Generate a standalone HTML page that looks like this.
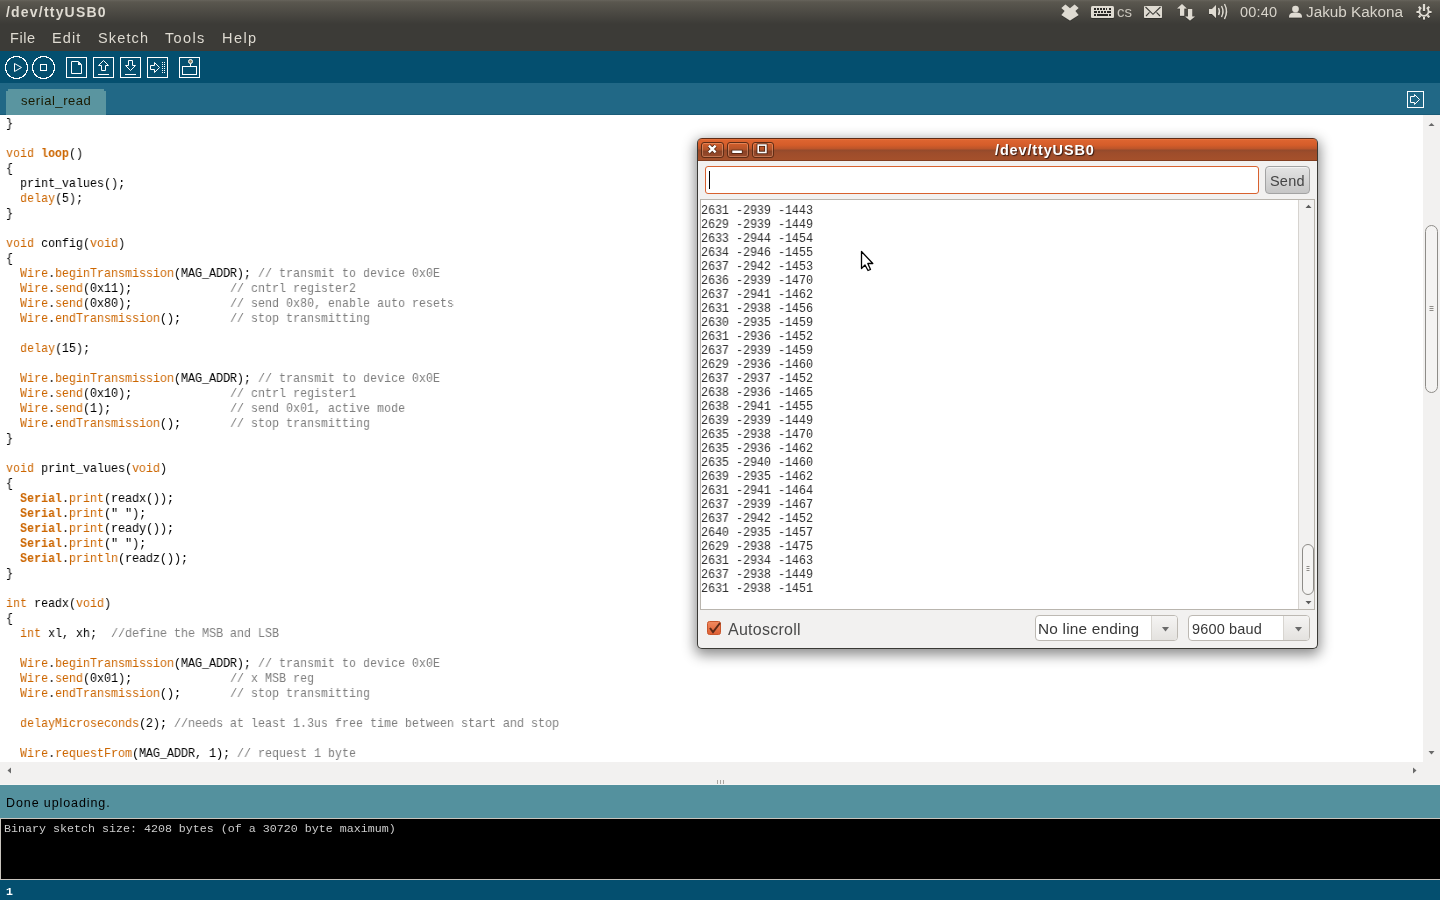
<!DOCTYPE html>
<html><head><meta charset="utf-8">
<style>
*{margin:0;padding:0;box-sizing:border-box}
.t{will-change:transform}
html,body{width:1440px;height:900px;overflow:hidden;background:#fff;font-family:"Liberation Sans",sans-serif}
.a{position:absolute}
#panel{left:0;top:0;width:1440px;height:51px;background:linear-gradient(#67645c 0px,#5a574f 2px,#3c3b37 24px,#3c3b37 51px)}
.pt{position:absolute;color:#dfdbd2;white-space:pre;line-height:16px;will-change:transform}
#toolbar{left:0;top:51px;width:1440px;height:32px;background:#044f6f}
#tabbar{left:0;top:83px;width:1440px;height:32px;background:#216886;border-bottom:1px solid #1a5c78}
#tab{left:6px;top:89px;width:100px;height:26px;background:#5a95a0;clip-path:polygon(2px 0,98px 0,98px 2px,100px 2px,100px 26px,0 26px,0 2px,2px 2px)}
#editor{left:0;top:115px;width:1423px;height:647px;background:#fff;overflow:hidden}
pre.code{position:absolute;left:6px;top:0;font-family:"Liberation Mono",monospace;font-size:13.3px;transform:scaleX(0.87719);transform-origin:0 0;line-height:15px;color:#000;white-space:pre}
.k{color:#cc6600}
.b{color:#cc6600;font-weight:bold}
.c{color:#7e7e7e}
#vscroll{left:1423px;top:115px;width:17px;height:670px;background:#f2f1f0}
#hscroll{left:0;top:762px;width:1440px;height:23px;background:#f2f1f0}
#status{left:0;top:784px;width:1440px;height:34px;background:#54919e;border-top:1px solid #f6f5f4}
#console{left:0;top:818px;width:1440px;height:62px;background:#000;border:1px solid #c8c4bd;border-right:none}
#linestatus{left:0;top:880px;width:1440px;height:20px;background:#044f6f}
.mono{font-family:"Liberation Mono",monospace;white-space:pre}
/* serial window */
#win{left:697px;top:138px;width:621px;height:511px;border-radius:5px 5px 5px 5px;box-shadow:0 4px 13px 2px rgba(0,0,0,0.45);background:#f2f1f0;border:1px solid #3a3935;border-top:none;overflow:hidden}
#wtitle{left:-1px;top:0;width:621px;height:23px;border-radius:5px 5px 0 0;border:1px solid #5e2c16;border-bottom:none;background:linear-gradient(#f0804a 0px,#dd6430 1px,#d55d2a 6px,#b9542a 10px,#944a2c 11px,#9e4d2b 14px,#a5502b 21px,#5e2c16 22px)}
.wb{position:absolute;top:3.5px;width:22.5px;height:16px;border-radius:3px;border:1px solid #5e2c16;box-shadow:inset 0 0 0 1px rgba(255,190,150,0.4);background:linear-gradient(#d55d2a,#b4542a 45%,#8a4327 60%,#9a4a2a)}
#input{left:7px;top:28px;width:554px;height:28px;border:1px solid #d8622f;border-radius:3px;background:#fff}
#send{left:567px;top:28px;width:45px;height:28px;border:1px solid #a3a3a3;border-radius:4px;background:linear-gradient(#e4e4e4,#c6c6c6);box-shadow:inset 0 1px 0 #f4f4f4}
#out{left:2px;top:61px;width:615px;height:411px;border:1px solid #b9b5ae;background:#fff;overflow:hidden}
#oscroll{left:597px;top:0;width:16px;height:409px;background:#f2f1f0;border-left:1px solid #d6d3cf}
pre.serial{position:absolute;left:0px;top:4px;font-family:"Liberation Mono",monospace;font-size:12px;transform:scaleX(0.9722);transform-origin:0 0;line-height:14px;color:#2e2e2e;white-space:pre}
.dd{position:absolute;top:477px;height:26px;border:1px solid #bdb9b3;border-radius:4px;background:#fff}
.ddb{position:absolute;top:0;right:0;height:24px;border-left:1px solid #d8d5d0;background:linear-gradient(#f5f4f3,#e4e2df);border-radius:0 3px 3px 0}
</style></head><body>
<div id="panel" class="a"></div>
<div class="t pt" style="left:6px;top:4px;font-weight:bold;font-size:14px;letter-spacing:1.2px">/dev/ttyUSB0</div>
<div class="t pt" style="left:9.5px;top:30px;font-size:14.5px;letter-spacing:0.6px">File</div>
<div class="t pt" style="left:52px;top:30px;font-size:14.5px;letter-spacing:1.1px">Edit</div>
<div class="t pt" style="left:97.5px;top:30px;font-size:14.5px;letter-spacing:1.15px">Sketch</div>
<div class="t pt" style="left:165px;top:30px;font-size:14.5px;letter-spacing:1.35px">Tools</div>
<div class="t pt" style="left:221.5px;top:30px;font-size:14.5px;letter-spacing:1.45px">Help</div>
<div class="t pt" style="left:1117px;top:4px;font-size:15px;color:#c8c4bb">cs</div>
<div class="t pt" style="left:1240px;top:4px;font-size:14.5px;letter-spacing:0.2px;color:#d8d4cb">00:40</div>
<div class="t pt" style="left:1306px;top:4px;font-size:15.3px;color:#d8d4cb">Jakub Kakona</div>

<div id="toolbar" class="a"></div>
<div id="tabbar" class="a"></div>
<div id="tab" class="a"></div>
<div class="t a" style="left:21px;top:93px;font-size:13px;letter-spacing:0.55px;color:#1a1a00;white-space:pre;line-height:16px">serial_read</div>

<div id="editor" class="a"><pre class="code t" style="top:1px">}

<span class="k">void</span> <span class="b">loop</span>()
{
  print_values();
  <span class="k">delay</span>(5);
}

<span class="k">void</span> config(<span class="k">void</span>)
{
  <span class="k">Wire</span>.<span class="k">beginTransmission</span>(MAG_ADDR); <span class="c">// transmit to device 0x0E</span>
  <span class="k">Wire</span>.<span class="k">send</span>(0x11);              <span class="c">// cntrl register2</span>
  <span class="k">Wire</span>.<span class="k">send</span>(0x80);              <span class="c">// send 0x80, enable auto resets</span>
  <span class="k">Wire</span>.<span class="k">endTransmission</span>();       <span class="c">// stop transmitting</span>

  <span class="k">delay</span>(15);

  <span class="k">Wire</span>.<span class="k">beginTransmission</span>(MAG_ADDR); <span class="c">// transmit to device 0x0E</span>
  <span class="k">Wire</span>.<span class="k">send</span>(0x10);              <span class="c">// cntrl register1</span>
  <span class="k">Wire</span>.<span class="k">send</span>(1);                 <span class="c">// send 0x01, active mode</span>
  <span class="k">Wire</span>.<span class="k">endTransmission</span>();       <span class="c">// stop transmitting</span>
}

<span class="k">void</span> print_values(<span class="k">void</span>)
{
  <span class="b">Serial</span>.<span class="k">print</span>(readx());
  <span class="b">Serial</span>.<span class="k">print</span>(" ");
  <span class="b">Serial</span>.<span class="k">print</span>(ready());
  <span class="b">Serial</span>.<span class="k">print</span>(" ");
  <span class="b">Serial</span>.<span class="k">println</span>(readz());
}

<span class="k">int</span> readx(<span class="k">void</span>)
{
  <span class="k">int</span> xl, xh;  <span class="c">//define the MSB and LSB</span>

  <span class="k">Wire</span>.<span class="k">beginTransmission</span>(MAG_ADDR); <span class="c">// transmit to device 0x0E</span>
  <span class="k">Wire</span>.<span class="k">send</span>(0x01);              <span class="c">// x MSB reg</span>
  <span class="k">Wire</span>.<span class="k">endTransmission</span>();       <span class="c">// stop transmitting</span>

  <span class="k">delayMicroseconds</span>(2); <span class="c">//needs at least 1.3us free time between start and stop</span>

  <span class="k">Wire</span>.<span class="k">requestFrom</span>(MAG_ADDR, 1); <span class="c">// request 1 byte</span></pre></div>
<div id="vscroll" class="a"></div>
<div id="hscroll" class="a"></div>
<div id="status" class="a"><div class="t a" style="left:6px;top:10px;font-size:12.5px;letter-spacing:0.9px;color:#000;white-space:pre;line-height:16px">Done uploading.</div></div>
<div id="console" class="a"><div class="t a mono" style="left:3px;top:3px;font-size:11.67px;line-height:14px;color:#ccc">Binary sketch size: 4208 bytes (of a 30720 byte maximum)</div></div>
<div id="linestatus" class="a"><div class="t a mono" style="left:6px;top:5px;font-size:11.5px;font-weight:bold;line-height:14px;color:#fff">1</div></div>

<svg class="a" style="left:0;top:0" width="1440" height="900" viewBox="0 0 1440 900" fill="none" stroke="#fff" stroke-width="1">
 <!-- toolbar -->
 <circle cx="16.5" cy="67.5" r="11" shape-rendering="crispEdges"/>
 <path d="M14.5,63.5 L21.5,67.5 L14.5,71.5 Z"/>
 <circle cx="43.5" cy="67.5" r="11" shape-rendering="crispEdges"/>
 <rect x="40.5" y="64.5" width="6" height="6"/>
 <rect x="66.5" y="57.5" width="20" height="20"/>
 <path d="M71.5,61.5 H78.5 L81.5,64.5 V73.5 H71.5 Z"/>
 <path d="M78,61.5 L81.5,65 L78,65 Z" fill="#fff" stroke="none"/>
 <rect x="93.5" y="57.5" width="20" height="20"/>
 <path d="M103.5,60.5 L108.5,65.5 H105.5 V70.5 H101.5 V65.5 H98.5 Z"/>
 <path d="M98,74.5 H109"/>
 <rect x="120.5" y="57.5" width="20" height="20"/>
 <path d="M128.5,60.5 H132.5 V65.5 H135.5 L130.5,70.5 L125.5,65.5 H128.5 Z"/>
 <path d="M125,74.5 H136"/>
 <rect x="147.5" y="57.5" width="20" height="20"/>
 <path d="M150.5,65.5 H154.5 V62.5 L159.5,67.5 L154.5,72.5 V69.5 H150.5 Z"/>
 <path d="M162.5,62 V74 M164.5,62 V74" stroke-dasharray="1 1"/>
 <rect x="179.5" y="57.5" width="20" height="20"/>
 <rect x="182.5" y="66.5" width="14" height="8"/>
 <path d="M190.5,63.5 V66.5"/>
 <circle cx="190.5" cy="61.5" r="2" fill="#8d8466"/>
 <!-- tabbar icon -->
 <rect x="1407.5" y="91.5" width="16" height="16"/>
 <path d="M1410.5,96.5 H1414.5 V94.5 L1419.5,99.5 L1414.5,104.5 V102.5 H1410.5 Z"/>
 <!-- scroll arrows -->
 <g fill="#6a6a6a" stroke="none">
  <path d="M1428.5,126 L1434.5,126 L1431.5,123 Z"/>
  <path d="M1428.5,751 L1434.5,751 L1431.5,754.5 Z"/>
  <path d="M11,767.5 L11,773.5 L7.5,770.5 Z"/>
  <path d="M1413,767.5 L1413,773.5 L1416.5,770.5 Z"/>
 </g>
 <rect x="1425.5" y="225.5" width="12" height="167" rx="6" fill="#f4f3f2" stroke="#8e8c88"/>
 <path d="M1429.5,306.5 H1433.5 M1429.5,308.5 H1433.5 M1429.5,310.5 H1433.5" stroke="#8e8c88"/>
 <path d="M717.5,780 V784 M720.5,780 V784 M723.5,780 V784" stroke="#a9a6a1"/>
 <!-- panel icons -->
 <defs><filter id="halo" x="-20%" y="-20%" width="140%" height="140%"><feDropShadow dx="0" dy="0.3" stdDeviation="0.5" flood-color="#000" flood-opacity="0.9"/></filter></defs>
 <g fill="#dfdbd2" stroke="none" filter="url(#halo)">
  <path d="M1061.4,7.9 L1065.4,4.6 L1070,8.3 L1074.6,4.6 L1078.6,7.9 L1075.3,11.1 L1078.6,15 L1070,20.6 L1061.4,15 L1064.7,11.1 Z"/>
  <rect x="1091" y="6" width="23" height="12" rx="1.5"/>
  <rect x="1144" y="6" width="18" height="12" rx="1"/>
  <path d="M1182,4 L1186.8,8.6 H1184.2 V15.8 H1180 V8.6 H1177.1 Z"/>
  <path d="M1188,8.9 H1192.2 V16.4 H1195 L1190,20.6 L1185.1,16.4 H1188 Z"/>
  <path d="M1209,9 L1212,9 L1216,5 L1216,18 L1212,14 L1209,14 Z"/>
  <circle cx="1295.5" cy="9" r="3.3"/>
  <path d="M1289,17.5 C1289,13 1292,12.5 1295.5,12.5 C1299,12.5 1302,13 1302,17.5 Z"/>
 </g>
 <g stroke="#3c3b37" stroke-width="1">
  <path d="M1094.2,9 H1095.8 M1097.1,9 H1098.7 M1100,9 H1101.6 M1102.9,9 H1104.5 M1105.8,9 H1107.4 M1108.9,9 H1110.5 M1094,12 H1096.8 M1098.2,12 H1099.8 M1101.1,12 H1102.7 M1104,12 H1105.6 M1107.2,12 H1110.6 M1094.2,15 H1095.8 M1097.4,15 H1107.5 M1108.9,15 H1110.5" stroke-width="2" stroke="#2a2926" shape-rendering="crispEdges"/>
  <path d="M1145.5,7 L1153,14.3 L1160.5,7 M1146,16 L1149.5,12.3 M1160,16 L1156.5,12.3" stroke-width="1.1"/>
 </g>
 <g stroke="#dfdbd2" stroke-width="1.3" fill="none" filter="url(#halo)">
  <path d="M1218.5,8 Q1220.5,11.5 1218.5,15"/>
  <path d="M1221.5,6 Q1224.5,11.5 1221.5,17"/>
  <path d="M1224.5,4 Q1228.5,11.5 1224.5,19"/>
  <path d="M1421.2,7.6 A4.6,4.6 0 1 0 1426.8,7.6" stroke-width="1.7"/>
  <path d="M1424,4 V11" stroke-width="2.2"/>
  <path d="M1416.5,12 H1419 M1429,12 H1431.5 M1424,17 V19.5 M1418.7,6.7 L1420.5,8.5 M1429.3,6.7 L1427.5,8.5 M1418.7,17.3 L1420.5,15.5 M1429.3,17.3 L1427.5,15.5" stroke-width="2"/>
 </g>
</svg>

<div id="win" class="a">
 <div id="wtitle" class="a"></div>
 <div class="wb" style="left:3px"></div>
 <div class="wb" style="left:28.5px"></div>
 <div class="wb" style="left:53.5px"></div>
 <svg class="a" style="left:0;top:1px" width="621" height="22" fill="none" stroke="#fff">
  <g stroke="#4a200e" stroke-linecap="square">
  <path d="M10.9,6.6 L17.6,13.3 M17.6,6.6 L10.9,13.3" stroke-width="3.8" stroke-linecap="butt"/>
  <path d="M35.5,12.85 H42.6" stroke-width="4"/>
  <rect x="60.2" y="6.1" width="7.7" height="7.4" stroke-width="3.2"/>
  </g>
  <g stroke="#fff" stroke-linecap="square">
  <path d="M10.9,6.6 L17.6,13.3 M17.6,6.6 L10.9,13.3" stroke-width="2.4" stroke-linecap="butt"/>
  <path d="M35.5,12.85 H42.6" stroke-width="2.5"/>
  <rect x="60.2" y="6.1" width="7.7" height="7.4" stroke-width="1.6"/>
  </g>
 </svg>
 <div class="t a" style="left:297px;top:4px;font-weight:bold;letter-spacing:0.85px;font-size:14.5px;color:#fff;text-shadow:1px 1px 1px #3a1a10;white-space:pre;line-height:16px">/dev/ttyUSB0</div>
 <div id="input" class="a"><div class="a" style="left:3px;top:4px;width:1px;height:18px;background:#000"></div></div>
 <div id="send" class="a"><div class="t a" style="left:4px;top:6px;font-size:14.5px;letter-spacing:0.2px;color:#454545;line-height:16px">Send</div></div>
 <div id="out" class="a">
  <pre class="serial t">2631 -2939 -1443
2629 -2939 -1449
2633 -2944 -1454
2634 -2946 -1455
2637 -2942 -1453
2636 -2939 -1470
2637 -2941 -1462
2631 -2938 -1456
2630 -2935 -1459
2631 -2936 -1452
2637 -2939 -1459
2629 -2936 -1460
2637 -2937 -1452
2638 -2936 -1465
2638 -2941 -1455
2639 -2939 -1449
2635 -2938 -1470
2635 -2936 -1462
2635 -2940 -1460
2639 -2935 -1462
2631 -2941 -1464
2637 -2939 -1467
2637 -2942 -1452
2640 -2935 -1457
2629 -2938 -1475
2631 -2934 -1463
2637 -2938 -1449
2631 -2938 -1451</pre>
  <div id="oscroll" class="a">
   <svg class="a" style="left:0;top:0" width="16" height="410">
    <path d="M6.5,8 L12.5,8 L9.5,4.8 Z" fill="#5a5a5a"/>
    <path d="M6.5,401 L12.5,401 L9.5,404.3 Z" fill="#5a5a5a"/>
    <rect x="3.5" y="344.5" width="11" height="50" rx="5.5" fill="#f5f4f3" stroke="#8e8c88"/>
    <path d="M7.5,366.5 H10.5 M7.5,368.5 H10.5 M7.5,370.5 H10.5" stroke="#8e8c88"/>
   </svg>
  </div>
 </div>
 <svg class="a" style="left:8px;top:482px" width="16" height="16">
  <defs><linearGradient id="cg" x1="0" y1="0" x2="0" y2="1"><stop offset="0" stop-color="#f08a60"/><stop offset="1" stop-color="#df5f33"/></linearGradient></defs>
  <rect x="1.5" y="1.5" width="13" height="13" rx="2" fill="url(#cg)" stroke="#c8562c"/>
  <path d="M4,8 L7,12 L14,3" stroke="#5e2a17" stroke-width="2" fill="none"/>
 </svg>
 <div class="t a" style="left:30px;top:483.5px;font-size:16px;letter-spacing:0.25px;color:#4a4a4a;white-space:pre;line-height:16px">Autoscroll</div>
 <div class="dd" style="left:337px;width:143px">
  <div class="t a" style="left:2px;top:4.5px;font-size:15.4px;letter-spacing:0.2px;color:#383838;white-space:pre;line-height:16px">No line ending</div>
  <div class="ddb" style="width:26px"><svg width="26" height="24"><path d="M10,11 L17,11 L13.5,15.5 Z" fill="#6a6a6a"/></svg></div>
 </div>
 <div class="dd" style="left:490px;width:122px">
  <div class="t a" style="left:3px;top:4.5px;font-size:14.5px;letter-spacing:0.15px;color:#383838;white-space:pre;line-height:16px">9600 baud</div>
  <div class="ddb" style="width:26px"><svg width="26" height="24"><path d="M11,11 L18,11 L14.5,15.5 Z" fill="#6a6a6a"/></svg></div>
 </div>
</div>

<svg class="a" style="left:855px;top:246px" width="26" height="30">
 <path d="M6.5,5.5 L6.5,22.5 L10,19 L13,24.5 L15.5,23.5 L12.8,17.5 L17.8,17.5 Z" fill="#fff" stroke="#000" stroke-width="1.3" stroke-linejoin="round"/>
</svg>
</body></html>
